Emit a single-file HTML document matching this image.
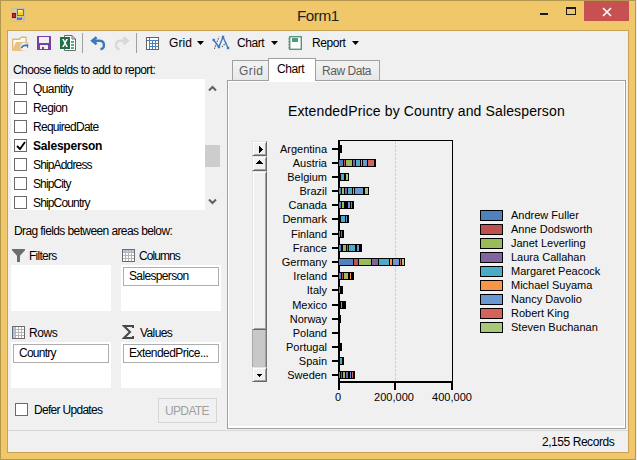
<!DOCTYPE html>
<html><head><meta charset="utf-8">
<style>
*{box-sizing:border-box;margin:0;padding:0}
html,body{width:637px;height:460px;overflow:hidden;background:#f0f0f0}
body{position:relative;font-family:"Liberation Sans",sans-serif;font-size:12px;color:#000}
.a{position:absolute}
.t{position:absolute;white-space:nowrap;line-height:12px;font-size:12px;letter-spacing:-0.45px}
#frame{left:0;top:0;width:636px;height:460px;background:#f0c86a;border:1px solid #b4974f}
#client{left:7px;top:30px;width:622px;height:423px;border:1px solid #c7a254;background:#f0f0f0}
.cb{position:absolute;width:13px;height:13px;border:1px solid #6a6a6a;background:#fff}
.lst{font-size:12px}
.wbox{position:absolute;background:#fff}
.fld{position:absolute;background:#fff;border:1px solid #adadad}
.arr{position:absolute;width:7px;height:4px;background:#000;clip-path:polygon(0 0,100% 0,50% 100%)}

.ct{position:absolute;left:227px;width:100px;text-align:right;font-size:11px;line-height:11px;white-space:nowrap}
.lt{position:absolute;left:511px;font-size:11px;line-height:11px;white-space:nowrap}
.xt{position:absolute;width:40px;text-align:center;font-size:11px;line-height:11px;white-space:nowrap}
.sb{position:absolute;left:252px;width:15px;background:#f0f0f0;border-top:1px solid #e3e3e3;border-left:1px solid #e3e3e3;border-right:1px solid #696969;border-bottom:1px solid #696969;box-shadow:inset 1px 1px 0 #fff,inset -1px -1px 0 #a0a0a0}
</style></head><body>
<div id="frame" class="a"></div>
<div id="client" class="a"></div>

<!-- title bar -->
<svg class="a" style="left:11px;top:8px" width="14" height="14" viewBox="0 0 14 14" shape-rendering="crispEdges">
 <rect x="0" y="0" width="14" height="14" fill="#c4c0b0"/>
 <rect x="1" y="1" width="12" height="12" fill="#f0c86a"/>
 <rect x="1" y="4" width="5" height="1" fill="#c4c0b0"/>
 <rect x="5" y="1" width="1" height="12" fill="#c4c0b0"/>
 <rect x="1" y="10" width="12" height="1" fill="#c4c0b0"/>
 <rect x="12" y="1" width="1" height="12" fill="#c4c0b0"/>
 <rect x="6" y="1" width="7" height="7" fill="#9a7300"/>
 <rect x="7" y="2" width="5" height="5" fill="#f8d030"/>
 <rect x="7" y="2" width="4" height="2" fill="#fde98a"/>
 <rect x="1" y="5" width="4" height="5" fill="#8a0c0c"/>
 <rect x="2" y="6" width="2" height="3" fill="#d42a2a"/>
 <rect x="6" y="9" width="5" height="3" fill="#3a78e0"/>
 <rect x="7" y="9" width="3" height="1" fill="#8ab8f8"/>
</svg>
<div class="t" style="left:297px;top:8px;font-size:15.3px;line-height:15px;letter-spacing:-0.5px;color:#222">Form1</div>
<!-- min / max / close -->
<div class="a" style="left:540px;top:13px;width:8px;height:2px;background:#1a1a1a"></div>
<div class="a" style="left:566px;top:7px;width:10px;height:8px;border:1px solid #1a1a1a;border-top-width:2px"></div>
<div class="a" style="left:584px;top:1px;width:45px;height:20px;background:#c75050"></div>
<svg class="a" style="left:601px;top:6px" width="12" height="12" viewBox="0 0 12 12"><path d="M2 2L10 10M10 2L2 10" stroke="#fff" stroke-width="1.6"/></svg>


<!-- toolbar -->
<svg class="a" style="left:12px;top:36px" width="17" height="15" viewBox="0 0 17 15">
 <path d="M0.7 14 V3.3 H7.6 L9.2 1.2 H14.1 V14 H0.7 Z" fill="#fff" stroke="#e7b66c" stroke-width="1.4" stroke-linejoin="round"/>
 <path d="M0.4 14.3 L3.8 6 H16.4 L13 14.3 Z" fill="#e9c285"/>
 <circle cx="12.4" cy="10.8" r="3.9" fill="#f4f4f4"/>
 <path d="M9.4 12 Q11.2 8.6 14.4 9.8" stroke="#3a76bb" stroke-width="1.7" fill="none"/>
 <path d="M13.2 8.6 L16.4 8.2 L16 12.4 Z" fill="#3a76bb"/>
</svg>
<svg class="a" style="left:37px;top:36px" width="14" height="14" viewBox="0 0 14 14">
 <path d="M0 0 H14 V14 H0 Z M2 1 V7 H12 V1 Z M3 9 V13 H5 V11 H7 V13 H11 V9 Z" fill="#7a3fa5" fill-rule="evenodd"/>
</svg>
<svg class="a" style="left:59px;top:34px" width="18" height="17" viewBox="0 0 18 17">
 <path d="M5.5 1.5 H13 L16.5 5 V16.5 H5.5 Z" fill="#fff" stroke="#6b6b6b" stroke-width="1"/>
 <path d="M13 1.5 V5 H16.5" fill="none" stroke="#6b6b6b" stroke-width="1"/>
 <rect x="12" y="7" width="3" height="2" fill="#55ab84"/>
 <rect x="12" y="10" width="3" height="2" fill="#55ab84"/>
 <rect x="12" y="13" width="3" height="2" fill="#55ab84"/>
 <rect x="1" y="3" width="10" height="12" fill="#1e7145"/>
 <path d="M3 5 L5.3 9 L3 13 H4.8 L6 10.8 L7.2 13 H9 L6.8 9 L9 5 H7.2 L6 7.2 L4.8 5 Z" fill="#fff"/>
</svg>
<div class="a" style="left:82px;top:33px;width:1px;height:20px;background:#a0a0a0"></div>
<svg class="a" style="left:90px;top:36px" width="16" height="15" viewBox="0 0 16 15">
 <path d="M6.6 1.3 L2.3 4.8 L6.6 8.3" fill="none" stroke="#3d79b8" stroke-width="2.6"/>
 <path d="M3.5 4.8 H10 A4.3 4.3 0 0 1 10.5 13.3" fill="none" stroke="#3d79b8" stroke-width="2.4"/>
</svg>
<svg class="a" style="left:114px;top:36px;transform:scaleX(-1)" width="16" height="15" viewBox="0 0 16 15">
 <path d="M6.6 1.3 L2.3 4.8 L6.6 8.3" fill="none" stroke="#d8d8d8" stroke-width="2.6"/>
 <path d="M3.5 4.8 H10 A4.3 4.3 0 0 1 10.5 13.3" fill="none" stroke="#d8d8d8" stroke-width="2.4"/>
</svg>
<div class="a" style="left:136px;top:33px;width:1px;height:20px;background:#a0a0a0"></div>
<svg class="a" style="left:146px;top:37px" width="13" height="13" viewBox="0 0 13 13">
 <rect x="0.5" y="0.5" width="12" height="12" fill="#fff" stroke="#626262"/>
 <path d="M3.5 1 V12 M1 3.5 H12 M6.5 4 V12 M9.5 4 V12 M4 6.5 H12 M4 9.5 H12" stroke="#4a82c0" stroke-width="1"/>
</svg>
<div class="t" style="left:169px;top:37px;letter-spacing:0.1px">Grid</div>
<div class="arr" style="left:197px;top:41px"></div>
<svg class="a" style="left:211px;top:35px" width="19" height="16" viewBox="0 0 19 16">
 <path d="M3.4 13.8 L8 1.8" stroke="#444" stroke-width="1.1" stroke-dasharray="1.3 1.2" fill="none"/>
 <path d="M11 12 L16 6.5" stroke="#444" stroke-width="1.1" stroke-dasharray="1.3 1.2" fill="none"/>
 <path d="M2.7 5 L7.9 12 L12 2 L17 13" stroke="#3c78c0" stroke-width="1.4" fill="none"/>
 <rect x="1.5" y="3.8" width="2.4" height="2.4" fill="#3c78c0"/>
 <rect x="6.7" y="10.8" width="2.4" height="2.4" fill="#3c78c0"/>
 <rect x="10.8" y="0.8" width="2.4" height="2.4" fill="#3c78c0"/>
 <rect x="15.8" y="11.8" width="2.4" height="2.4" fill="#3c78c0"/>
</svg>
<div class="t" style="left:237px;top:37px">Chart</div>
<div class="arr" style="left:271px;top:41px"></div>
<svg class="a" style="left:288px;top:36px" width="14" height="14" viewBox="0 0 14 14">
 <rect x="1.7" y="0.7" width="11.6" height="12.6" fill="#fff" stroke="#4f9c7c" stroke-width="1.4"/>
 <rect x="4" y="2" width="6" height="4" fill="#4f9c7c"/>
 <g fill="none" stroke="#8a8a8a" stroke-width="0.8"><circle cx="1.2" cy="2.8" r="0.8"/><circle cx="1.2" cy="5.8" r="0.8"/><circle cx="1.2" cy="8.8" r="0.8"/><circle cx="1.2" cy="11.8" r="0.8"/></g>
</svg>
<div class="t" style="left:312px;top:37px">Report</div>
<div class="arr" style="left:352px;top:41px"></div>


<!-- left panel -->
<div class="t" style="left:13px;top:64px;letter-spacing:-0.6px">Choose fields to add to report:</div>
<div class="wbox" style="left:11px;top:79px;width:194px;height:131px"></div>
<div class="a" style="left:205px;top:145px;width:15px;height:22px;background:#cdcdcd"></div>
<svg class="a" style="left:208px;top:84px" width="9" height="8" viewBox="0 0 9 8"><path d="M1 6.5 L4.5 3 L8 6.5" stroke="#606060" stroke-width="2" fill="none"/></svg>
<svg class="a" style="left:208px;top:198px" width="9" height="8" viewBox="0 0 9 8"><path d="M1 1.5 L4.5 5 L8 1.5" stroke="#606060" stroke-width="2" fill="none"/></svg>
<div class="cb" style="left:14px;top:82px"></div>
<div class="t" style="left:33px;top:83px;letter-spacing:-0.6px">Quantity</div>
<div class="cb" style="left:14px;top:101px"></div>
<div class="t" style="left:33px;top:102px;letter-spacing:-0.6px">Region</div>
<div class="cb" style="left:14px;top:120px"></div>
<div class="t" style="left:33px;top:121px;letter-spacing:-0.72px">RequiredDate</div>
<div class="cb" style="left:14px;top:139px"></div>
<svg class="a" style="left:16px;top:141px" width="10" height="10" viewBox="0 0 10 10"><path d="M1 5 L4 8 L9 1" stroke="#000" stroke-width="1.8" fill="none"/></svg>
<div class="t" style="left:33px;top:140px;font-weight:bold;letter-spacing:-0.2px">Salesperson</div>
<div class="cb" style="left:14px;top:158px"></div>
<div class="t" style="left:33px;top:159px;letter-spacing:-0.85px">ShipAddress</div>
<div class="cb" style="left:14px;top:177px"></div>
<div class="t" style="left:33px;top:178px;letter-spacing:-0.88px">ShipCity</div>
<div class="cb" style="left:14px;top:196px"></div>
<div class="t" style="left:33px;top:197px;letter-spacing:-0.85px">ShipCountry</div>

<div class="t" style="left:14px;top:225px;letter-spacing:-0.6px">Drag fields between areas below:</div>
<svg class="a" style="left:12px;top:249px" width="13" height="13" viewBox="0 0 13 13"><path d="M0 0 H13 V1.3 L8 6.8 V13 H5 V6.8 L0 1.3 Z" fill="#6d6d6d"/></svg>
<div class="t" style="left:29px;top:250px;letter-spacing:-0.75px">Filters</div>
<div class="wbox" style="left:11px;top:265px;width:100px;height:46px"></div>

<svg class="a" style="left:122px;top:249px" width="13" height="13" viewBox="0 0 13 13" shape-rendering="crispEdges">
 <rect x="0" y="0" width="13" height="13" fill="#6a6a6a"/>
 <rect x="1" y="1" width="11" height="11" fill="#b4b4b4"/>
 <path d="M1 1h2v2h-2zM4 1h2v2h-2zM7 1h2v2h-2zM10 1h2v2h-2z" fill="#aecbef"/>
 <path d="M1 4h2v2h-2zM4 4h2v2h-2zM7 4h2v2h-2zM10 4h2v2h-2zM1 7h2v2h-2zM4 7h2v2h-2zM7 7h2v2h-2zM10 7h2v2h-2zM1 10h2v2h-2zM4 10h2v2h-2zM7 10h2v2h-2zM10 10h2v2h-2z" fill="#fff"/>
</svg>
<div class="t" style="left:139px;top:250px;letter-spacing:-0.95px">Columns</div>
<div class="wbox" style="left:121px;top:265px;width:100px;height:46px"></div>
<div class="fld" style="left:123px;top:267px;width:96px;height:19px"></div>
<div class="t" style="left:129px;top:270px;letter-spacing:-0.65px">Salesperson</div>

<svg class="a" style="left:12px;top:326px" width="13" height="13" viewBox="0 0 13 13" shape-rendering="crispEdges">
 <rect x="0" y="0" width="13" height="13" fill="#6a6a6a"/>
 <rect x="1" y="1" width="11" height="11" fill="#b4b4b4"/>
 <path d="M1 1h2v2h-2zM1 4h2v2h-2zM1 7h2v2h-2zM1 10h2v2h-2z" fill="#aecbef"/>
 <path d="M4 1h2v2h-2zM7 1h2v2h-2zM10 1h2v2h-2zM4 4h2v2h-2zM7 4h2v2h-2zM10 4h2v2h-2zM4 7h2v2h-2zM7 7h2v2h-2zM10 7h2v2h-2zM4 10h2v2h-2zM7 10h2v2h-2zM10 10h2v2h-2z" fill="#fff"/>
</svg>
<div class="t" style="left:29px;top:327px">Rows</div>
<div class="wbox" style="left:11px;top:342px;width:100px;height:46px"></div>
<div class="fld" style="left:13px;top:344px;width:96px;height:19px"></div>
<div class="t" style="left:19px;top:347px;letter-spacing:-0.75px">Country</div>

<svg class="a" style="left:122px;top:325px" width="13" height="14" viewBox="0 0 13 14"><path d="M11 3 V1 H2 L8 7 L2 13 H11 V11" stroke="#484848" stroke-width="2" fill="none" stroke-linejoin="miter" stroke-miterlimit="10"/></svg>
<div class="t" style="left:140px;top:327px;letter-spacing:-0.6px">Values</div>
<div class="wbox" style="left:121px;top:342px;width:100px;height:46px"></div>
<div class="fld" style="left:123px;top:344px;width:96px;height:19px"></div>
<div class="t" style="left:129px;top:347px;letter-spacing:-0.55px">ExtendedPrice...</div>

<div class="cb" style="left:15px;top:403px"></div>
<div class="t" style="left:34px;top:404px;letter-spacing:-0.7px">Defer Updates</div>
<div class="a" style="left:158px;top:398px;width:59px;height:25px;border:1px solid #d5d5d5;background:#f0f0f0"></div>
<div class="t" style="left:165px;top:405px;color:#a0a0a0;letter-spacing:-0.65px">UPDATE</div>

<!-- tab control -->
<div class="a" style="left:227px;top:80px;width:399px;height:349px;border:1px solid #a0a0a0;background:#f0f0f0"></div>
<div class="a" style="left:228px;top:81px;width:397px;height:347px;border:1px solid #fff;border-bottom-width:2px"></div>
<div class="a" style="left:232px;top:60px;width:37px;height:20px;border:1px solid #a0a0a0;border-bottom:none;background:linear-gradient(#f3f3f3,#e8e8e8)"></div>
<div class="a" style="left:315px;top:60px;width:65px;height:20px;border:1px solid #a0a0a0;border-bottom:none;background:linear-gradient(#f3f3f3,#e8e8e8)"></div>
<div class="a" style="left:268px;top:58px;width:48px;height:23px;border:1px solid #a0a0a0;border-bottom:none;background:#fff"></div>
<div class="a" style="left:269px;top:80px;width:46px;height:2px;background:#fff"></div>
<div class="t" style="left:239px;top:65px;color:#5c5c5c;letter-spacing:0.4px">Grid</div>
<div class="t" style="left:277px;top:63px">Chart</div>
<div class="t" style="left:322px;top:65px;color:#5c5c5c">Raw Data</div>

<!-- chart -->
<div class="a" style="left:288px;top:104px;font-size:14px;line-height:14px;white-space:nowrap;letter-spacing:0.13px">ExtendedPrice by Country and Salesperson</div>
<div class="sb" style="top:141px;height:15px"></div>
<div class="sb" style="top:156px;height:15px"></div>
<div class="sb" style="top:171px;height:159px"></div>
<div class="a" style="left:252px;top:330px;width:15px;height:37px;background:#c8c8c8;border-left:1px solid #a8a8a8;border-right:1px solid #7a7a7a;box-shadow:inset -1px 0 0 #a0a0a0"></div>
<div class="sb" style="top:367px;height:15px"></div>
<svg class="a" style="left:252px;top:141px" width="15" height="242" viewBox="0 0 15 242">
 <path d="M7 5h1v7h-1zM8 6h1v5h-1zM9 7h1v3h-1zM10 8h1v1h-1z" fill="#000" shape-rendering="crispEdges"/>
 <path d="M7 19h1v1h-1zM6 20h3v1h-3zM5 21h5v1h-5zM4 22h7v1h-7z" fill="#000" shape-rendering="crispEdges"/>
 <path d="M5 233h5v1h-5zM6 234h3v1h-3zM7 235h1v1h-1z" fill="#000" shape-rendering="crispEdges"/>
</svg>
<svg class="a" style="left:227px;top:80px" width="400" height="350" viewBox="227 80 400 350" shape-rendering="crispEdges">
<line x1="395.5" y1="141" x2="395.5" y2="381" stroke="#cfcfcf" stroke-width="1" stroke-dasharray="3 1"/>
<rect x="338" y="140" width="115" height="1" fill="#000"/>
<rect x="452" y="140" width="1" height="242" fill="#000"/>
<rect x="338" y="140" width="2" height="250" fill="#000"/>
<rect x="338" y="381" width="115" height="2" fill="#000"/>
<rect x="394" y="381" width="2" height="9" fill="#000"/>
<rect x="451" y="381" width="2" height="9" fill="#000"/>
<rect x="332" y="148" width="7" height="2" fill="#000"/>
<rect x="338" y="145" width="4" height="8" fill="#000"/>
<rect x="332" y="162" width="7" height="2" fill="#000"/>
<rect x="338" y="159" width="38" height="8" fill="#000"/>
<rect x="339" y="160" width="4" height="6" fill="#4f81bd"/>
<rect x="344" y="160" width="1" height="6" fill="#c0504d"/>
<rect x="346" y="160" width="6" height="6" fill="#9bbb59"/>
<rect x="353" y="160" width="2" height="6" fill="#8064a2"/>
<rect x="356" y="160" width="4" height="6" fill="#4bacc6"/>
<rect x="361" y="160" width="1" height="6" fill="#f79646"/>
<rect x="363" y="160" width="4" height="6" fill="#6b98d0"/>
<rect x="368" y="160" width="6" height="6" fill="#d6615d"/>
<rect x="332" y="176" width="7" height="2" fill="#000"/>
<rect x="338" y="173" width="11" height="8" fill="#000"/>
<rect x="341" y="174" width="3" height="6" fill="#4bacc6"/>
<rect x="346" y="174" width="2" height="6" fill="#a8c77a"/>
<rect x="332" y="190" width="7" height="2" fill="#000"/>
<rect x="338" y="187" width="31" height="8" fill="#000"/>
<rect x="339" y="188" width="2" height="6" fill="#4f81bd"/>
<rect x="342" y="188" width="2" height="6" fill="#9bbb59"/>
<rect x="345" y="188" width="2" height="6" fill="#8064a2"/>
<rect x="348" y="188" width="4" height="6" fill="#4bacc6"/>
<rect x="353" y="188" width="1" height="6" fill="#f79646"/>
<rect x="355" y="188" width="8" height="6" fill="#6b98d0"/>
<rect x="365" y="188" width="3" height="6" fill="#a8c77a"/>
<rect x="332" y="204" width="7" height="2" fill="#000"/>
<rect x="338" y="201" width="16" height="8" fill="#000"/>
<rect x="339" y="202" width="2" height="6" fill="#4f81bd"/>
<rect x="342" y="202" width="2" height="6" fill="#9bbb59"/>
<rect x="348" y="202" width="2" height="6" fill="#6b98d0"/>
<rect x="351" y="202" width="1" height="6" fill="#d6615d"/>
<rect x="332" y="218" width="7" height="2" fill="#000"/>
<rect x="338" y="215" width="11" height="8" fill="#000"/>
<rect x="341" y="216" width="4" height="6" fill="#4bacc6"/>
<rect x="346" y="216" width="1" height="6" fill="#6b98d0"/>
<rect x="332" y="233" width="7" height="2" fill="#000"/>
<rect x="338" y="230" width="6" height="8" fill="#000"/>
<rect x="339" y="231" width="1" height="6" fill="#4f81bd"/>
<rect x="341" y="231" width="1" height="6" fill="#8064a2"/>
<rect x="332" y="247" width="7" height="2" fill="#000"/>
<rect x="338" y="244" width="24" height="8" fill="#000"/>
<rect x="339" y="245" width="2" height="6" fill="#4f81bd"/>
<rect x="343" y="245" width="3" height="6" fill="#9bbb59"/>
<rect x="347" y="245" width="1" height="6" fill="#8064a2"/>
<rect x="349" y="245" width="6" height="6" fill="#4bacc6"/>
<rect x="357" y="245" width="2" height="6" fill="#6b98d0"/>
<rect x="332" y="261" width="7" height="2" fill="#000"/>
<rect x="338" y="258" width="67" height="8" fill="#000"/>
<rect x="339" y="259" width="14" height="6" fill="#4f81bd"/>
<rect x="354" y="259" width="4" height="6" fill="#c0504d"/>
<rect x="359" y="259" width="12" height="6" fill="#9bbb59"/>
<rect x="372" y="259" width="6" height="6" fill="#8064a2"/>
<rect x="379" y="259" width="10" height="6" fill="#4bacc6"/>
<rect x="390" y="259" width="2" height="6" fill="#f79646"/>
<rect x="393" y="259" width="6" height="6" fill="#6b98d0"/>
<rect x="400" y="259" width="1" height="6" fill="#d6615d"/>
<rect x="402" y="259" width="2" height="6" fill="#a8c77a"/>
<rect x="332" y="275" width="7" height="2" fill="#000"/>
<rect x="338" y="272" width="16" height="8" fill="#000"/>
<rect x="339" y="273" width="2" height="6" fill="#4f81bd"/>
<rect x="342" y="273" width="1" height="6" fill="#c0504d"/>
<rect x="344" y="273" width="4" height="6" fill="#9bbb59"/>
<rect x="350" y="273" width="1" height="6" fill="#f79646"/>
<rect x="332" y="289" width="7" height="2" fill="#000"/>
<rect x="338" y="286" width="5" height="8" fill="#000"/>
<rect x="339" y="287" width="1" height="6" fill="#4f81bd"/>
<rect x="332" y="304" width="7" height="2" fill="#000"/>
<rect x="338" y="301" width="8" height="8" fill="#000"/>
<rect x="341" y="302" width="1" height="6" fill="#4bacc6"/>
<rect x="332" y="318" width="7" height="2" fill="#000"/>
<rect x="338" y="315" width="3" height="8" fill="#000"/>
<rect x="332" y="332" width="7" height="2" fill="#000"/>
<rect x="332" y="346" width="7" height="2" fill="#000"/>
<rect x="338" y="343" width="4" height="8" fill="#000"/>
<rect x="332" y="360" width="7" height="2" fill="#000"/>
<rect x="338" y="357" width="6" height="8" fill="#000"/>
<rect x="340" y="358" width="2" height="6" fill="#4bacc6"/>
<rect x="332" y="374" width="7" height="2" fill="#000"/>
<rect x="338" y="371" width="17" height="8" fill="#000"/>
<rect x="339" y="372" width="1" height="6" fill="#4f81bd"/>
<rect x="341" y="372" width="1" height="6" fill="#c0504d"/>
<rect x="343" y="372" width="2" height="6" fill="#9bbb59"/>
<rect x="346" y="372" width="2" height="6" fill="#8064a2"/>
<rect x="350" y="372" width="1" height="6" fill="#6b98d0"/>
<rect x="352" y="372" width="1" height="6" fill="#d6615d"/>
<rect x="480" y="210" width="23" height="11" fill="#000"/>
<rect x="481" y="211" width="21" height="9" fill="#4f81bd"/>
<rect x="480" y="224" width="23" height="11" fill="#000"/>
<rect x="481" y="225" width="21" height="9" fill="#c0504d"/>
<rect x="480" y="238" width="23" height="11" fill="#000"/>
<rect x="481" y="239" width="21" height="9" fill="#9bbb59"/>
<rect x="480" y="252" width="23" height="11" fill="#000"/>
<rect x="481" y="253" width="21" height="9" fill="#8064a2"/>
<rect x="480" y="266" width="23" height="11" fill="#000"/>
<rect x="481" y="267" width="21" height="9" fill="#4bacc6"/>
<rect x="480" y="280" width="23" height="11" fill="#000"/>
<rect x="481" y="281" width="21" height="9" fill="#f79646"/>
<rect x="480" y="294" width="23" height="11" fill="#000"/>
<rect x="481" y="295" width="21" height="9" fill="#6b98d0"/>
<rect x="480" y="308" width="23" height="11" fill="#000"/>
<rect x="481" y="309" width="21" height="9" fill="#d6615d"/>
<rect x="480" y="322" width="23" height="11" fill="#000"/>
<rect x="481" y="323" width="21" height="9" fill="#a8c77a"/>
</svg>
<div class="ct" style="top:144px">Argentina</div>
<div class="ct" style="top:158px">Austria</div>
<div class="ct" style="top:172px">Belgium</div>
<div class="ct" style="top:186px">Brazil</div>
<div class="ct" style="top:200px">Canada</div>
<div class="ct" style="top:214px">Denmark</div>
<div class="ct" style="top:229px">Finland</div>
<div class="ct" style="top:243px">France</div>
<div class="ct" style="top:257px">Germany</div>
<div class="ct" style="top:271px">Ireland</div>
<div class="ct" style="top:285px">Italy</div>
<div class="ct" style="top:300px">Mexico</div>
<div class="ct" style="top:314px">Norway</div>
<div class="ct" style="top:328px">Poland</div>
<div class="ct" style="top:342px">Portugal</div>
<div class="ct" style="top:356px">Spain</div>
<div class="ct" style="top:370px">Sweden</div>
<div class="lt" style="top:210px">Andrew Fuller</div>
<div class="lt" style="top:224px">Anne Dodsworth</div>
<div class="lt" style="top:238px">Janet Leverling</div>
<div class="lt" style="top:252px">Laura Callahan</div>
<div class="lt" style="top:266px">Margaret Peacock</div>
<div class="lt" style="top:280px">Michael Suyama</div>
<div class="lt" style="top:294px">Nancy Davolio</div>
<div class="lt" style="top:308px">Robert King</div>
<div class="lt" style="top:322px">Steven Buchanan</div>
<div class="xt" style="left:318px;top:392px">0</div>
<div class="xt" style="left:374px;top:392px">200,000</div>
<div class="xt" style="left:432px;top:392px">400,000</div>

<!-- status bar -->
<div class="a" style="left:8px;top:430px;width:620px;height:1px;background:#d7d7d7"></div>
<div class="t" style="left:542px;top:436px">2,155 Records</div>

</body></html>
